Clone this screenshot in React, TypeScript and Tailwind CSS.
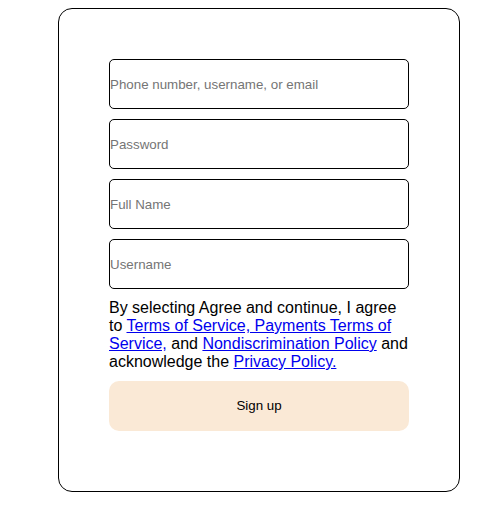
export default function App() {
  return (
    <div className="min-h-screen bg-white pt-2 pl-[58px] font-['Liberation_Sans',Arial,sans-serif]">
      <form className="flex w-[402px] flex-col gap-[10px] rounded-[14px] border border-black px-[50px] pt-[50px] pb-[60px]">
        <input
          type="text"
          placeholder="Phone number, username, or email"
          className="h-[50px] w-full rounded-[5px] border border-black bg-white text-[13.33px] text-black outline-none placeholder:text-[#757575]"
        />
        <input
          type="password"
          placeholder="Password"
          className="h-[50px] w-full rounded-[5px] border border-black bg-white text-[13.33px] text-black outline-none placeholder:text-[#757575]"
        />
        <input
          type="text"
          placeholder="Full Name"
          className="h-[50px] w-full rounded-[5px] border border-black bg-white text-[13.33px] text-black outline-none placeholder:text-[#757575]"
        />
        <input
          type="text"
          placeholder="Username"
          className="h-[50px] w-full rounded-[5px] border border-black bg-white text-[13.33px] text-black outline-none placeholder:text-[#757575]"
        />
        <p className="text-[16px] leading-[18px] text-black">
          By selecting Agree and continue, I agree to{" "}
          <a href="#" className="text-[#0000ee] underline">
            Terms of Service, Payments Terms of Service,
          </a>{" "}
          and{" "}
          <a href="#" className="text-[#0000ee] underline">
            Nondiscrimination Policy
          </a>{" "}
          and acknowledge the{" "}
          <a href="#" className="text-[#0000ee] underline">
            Privacy Policy.
          </a>
        </p>
        <button
          type="button"
          className="h-[50px] w-full rounded-[10px] bg-[#fae9d6] text-[13.33px] text-black"
        >
          Sign up
        </button>
      </form>
    </div>
  );
}
